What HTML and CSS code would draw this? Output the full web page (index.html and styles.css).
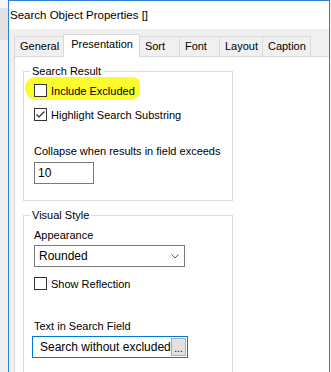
FILE: index.html
```html
<!DOCTYPE html>
<html>
<head>
    <title>Search Object Properties</title>
    <link rel="stylesheet" href="styles.css">
</head>
<body>
    <div class="screen">
        <div class="gutter"></div>
        <div class="window">
            <div class="titlebar">Search Object Properties []</div>
            <div class="dialog">
                <div class="tabs">
                    <div class="tab">General</div>
                    <div class="tab tab-active">Presentation</div>
                    <div class="tab">Sort</div>
                    <div class="tab">Font</div>
                    <div class="tab">Layout</div>
                    <div class="tab">Caption</div>
                </div>
                <div class="panel">
                    <fieldset class="group">
                        <legend>Search Result</legend>
                        <div class="check check-marker">
                            <span class="box"></span>
                            <span>Include Excluded</span>
                        </div>
                        <div class="check check-second">
                            <span class="box">
                                <svg width="11" height="11" viewBox="0 0 11 11"><polyline points="1.5,5.5 4,8 9.5,2.5" fill="none" stroke="#222" stroke-width="1.1"/></svg>
                            </span>
                            <span>Highlight Search Substring</span>
                        </div>
                        <div class="field-label field-collapse">Collapse when results in field exceeds</div>
                        <div class="textbox textbox-small">10</div>
                    </fieldset>

                    <fieldset class="group group-visual">
                        <legend>Visual Style</legend>
                        <div class="field-label field-appearance">Appearance</div>
                        <div class="combo">
                            <span>Rounded</span>
                            <svg width="8" height="5" viewBox="0 0 8 5"><polyline points="0.5,0.5 4,4 7.5,0.5" fill="none" stroke="#555" stroke-width="1"/></svg>
                        </div>
                        <div class="check check-reflection">
                            <span class="box"></span>
                            <span>Show Reflection</span>
                        </div>
                        <div class="field-label field-search">Text in Search Field</div>
                        <div class="textbox textbox-search">
                            <span class="textbox-text">Search without excluded</span>
                            <span class="browse">...</span>
                        </div>
                    </fieldset>
                </div>
            </div>
        </div>
    </div>
</body>
</html>
```

FILE: styles.css
```css
* {
    margin: 0;
    padding: 0;
    box-sizing: border-box;
}

body {
    font-family: 'Liberation Sans', Arial, sans-serif;
    font-size: 11px;
    color: #000;
    background: #f0f0f0;
    width: 331px;
    height: 372px;
    overflow: hidden;
}

.screen {
    display: flex;
    height: 372px;
}

.gutter {
    width: 8px;
    flex: none;
    background: linear-gradient(#f7f7f7 0, #f7f7f7 8px, #e2e2e2 8px, #e2e2e2 40px, #eeeeee 40px);
}

.window {
    width: 322px;
    flex: none;
    display: flex;
    flex-direction: column;
    border: 1px solid #2f80d6;
    border-bottom: none;
    background: #f0f0f0;
}

.titlebar {
    height: 28px;
    line-height: 28px;
    padding-left: 1px;
    background: #fff;
    font-size: 11.5px;
}

.dialog {
    flex: 1;
    display: flex;
    flex-direction: column;
    padding: 5px 0 0 5px;
}

/* Tab strip */
.tabs {
    display: flex;
    align-items: flex-end;
    height: 22px;
}

.tab {
    height: 20px;
    line-height: 18px;
    min-width: 41px;
    padding: 0 4px 0 5px;
    border: 1px solid #d9d9d9;
    border-bottom: none;
    margin-right: -1px;
    background: #f0f0f0;
    white-space: nowrap;
}

.tab-active {
    position: relative;
    z-index: 1;
    height: 23px;
    margin-bottom: -1px;
    padding: 0 6px 0 7px;
    background: #fff;
}

.panel {
    flex: 1;
    background: #fff;
    border: 1px solid #d9d9d9;
    border-right: none;
    border-bottom: none;
    padding: 7px 0 0 8px;
}

/* Group boxes */
.group {
    width: 210px;
    border: 1px solid #dcdcdc;
    padding: 0 10px 16px 10px;
}

.group legend {
    line-height: 14px;
    padding: 0 2px;
    margin-left: -4px;
}

.group-visual {
    margin-top: 7px;
    padding-bottom: 30px;
}

/* Checkboxes */
.check {
    display: flex;
    align-items: center;
    gap: 4px;
    height: 23px;
    white-space: nowrap;
}

.check .box {
    width: 13px;
    height: 13px;
    flex: none;
    border: 1px solid #333;
    background: #fff;
    display: flex;
}

.check-marker {
    width: 115px;
    margin: -1px 0 0 -9px;
    padding: 5px 0 1px 9px;
    background: #fbfb2e;
    border-radius: 11px 7px 9px 12px;
}

.check-second {
    margin-top: 3px;
}

.check-reflection {
    margin-top: 5px;
}

/* Labels and inputs */
.field-label {
    line-height: 14px;
    white-space: nowrap;
}

.field-collapse {
    margin-top: 18px;
}

.field-appearance {
    margin-top: 6px;
}

.field-search {
    margin-top: 24px;
}

.textbox {
    border: 1px solid #7a7a7a;
    background: #fff;
    height: 22px;
}

.textbox-small {
    width: 60px;
    margin-top: 4px;
    line-height: 20px;
    padding-left: 3px;
    font-size: 12px;
}

.combo {
    width: 151px;
    height: 22px;
    margin-top: 3px;
    border: 1px solid #7a7a7a;
    display: flex;
    align-items: center;
    justify-content: space-between;
    padding: 0 5px 0 4px;
    font-size: 12px;
}

.textbox-search {
    width: 156px;
    margin: 3px 0 0 -2px;
    border-color: #0078d7;
    display: flex;
    align-items: center;
    padding: 0 1px 0 7px;
    font-size: 12px;
}

.textbox-text {
    flex: 1;
    white-space: nowrap;
}

.browse {
    flex: none;
    width: 15px;
    height: 18px;
    background: #e1e1e1;
    border: 1px solid #adadad;
    font-size: 10px;
    line-height: 20px;
    text-align: center;
}
```
